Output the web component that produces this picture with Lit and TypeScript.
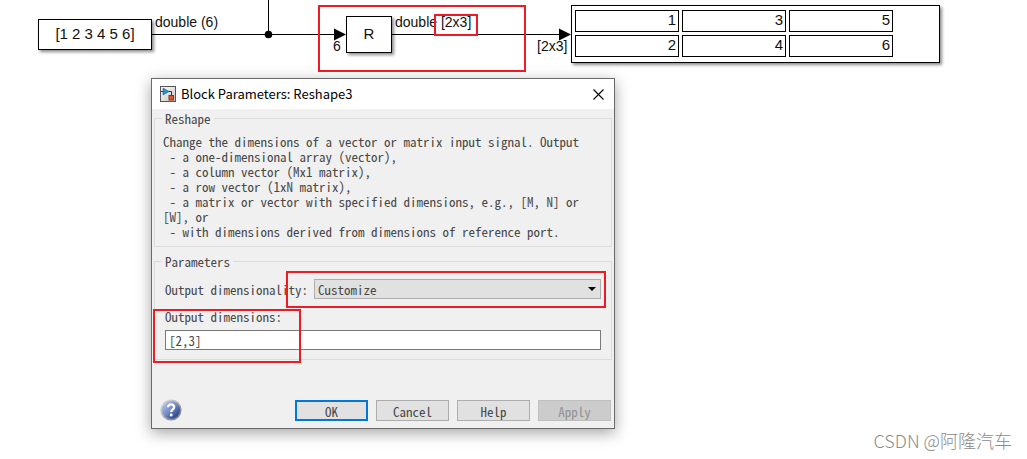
import { LitElement, html, css, svg } from "lit";
import { customElement, state } from "lit/decorators.js";

const DESCRIPTION = [
  "Change the dimensions of a vector or matrix input signal. Output",
  " - a one-dimensional array (vector),",
  " - a column vector (Mx1 matrix),",
  " - a row vector (1xN matrix),",
  " - a matrix or vector with specified dimensions, e.g., [M, N] or",
  "[W], or",
  " - with dimensions derived from dimensions of reference port.",
].join("\n");

const MATRIX = [
  [1, 3, 5],
  [2, 4, 6],
];

@customElement("model-canvas")
export class ModelCanvas extends LitElement {
  static styles = css`
    :host {
      display: block;
      position: absolute;
      inset: 0;
      font: 14px/16px "Liberation Sans", Arial, sans-serif;
      color: #111;
    }
    .wires {
      position: absolute;
      left: 0;
      top: 0;
    }
    .block {
      position: absolute;
      box-sizing: border-box;
      display: flex;
      align-items: center;
      justify-content: center;
      border: 1px solid #000;
      background: #fff;
      box-shadow: 2px 2px 3px rgba(0, 0, 0, 0.45);
      font-size: 15px;
    }
    .constant {
      left: 38px;
      top: 19px;
      width: 114px;
      height: 31px;
      padding-bottom: 2px;
    }
    .reshape {
      left: 346px;
      top: 16px;
      width: 46px;
      height: 37px;
      padding-bottom: 2px;
    }
    .display {
      left: 571px;
      top: 5px;
      width: 369px;
      height: 58px;
      align-items: flex-start;
      justify-content: flex-start;
      padding: 1px 0;
    }
    .matrix {
      border-collapse: separate;
      border-spacing: 3px;
    }
    .matrix td {
      box-sizing: border-box;
      width: 104px;
      height: 22px;
      padding: 0 2px 2px;
      border: 1px solid #000;
      text-align: right;
      line-height: 18px;
    }
    .label {
      position: absolute;
      white-space: pre;
    }
    .out-constant {
      left: 155px;
      top: 14px;
    }
    .in-reshape {
      left: 333px;
      top: 38px;
    }
    .out-reshape {
      left: 395px;
      top: 14px;
    }
    .in-display {
      left: 537px;
      top: 38px;
    }
  `;

  render() {
    return html`
      <svg class="wires" width="600" height="78" aria-hidden="true">
        ${svg`
          <g stroke="#000" stroke-width="1" fill="none">
            <path d="M152 34.5H340M392 34.5H562M268.5 0V34" />
          </g>
          <circle cx="268.5" cy="34.5" r="3.8" />
          <path d="M334 28.5L346 34.5L334 40.5ZM559 28.5L571 34.5L559 40.5Z" />
        `}
      </svg>
      <div class="block constant">[1 2 3 4 5 6]</div>
      <div class="block reshape">R</div>
      <div class="block display">
        <table class="matrix">
          <tbody>
            ${MATRIX.map((row) => html`<tr>${row.map((v) => html`<td>${v}</td>`)}</tr>`)}
          </tbody>
        </table>
      </div>
      <span class="label out-constant">double (6)</span>
      <span class="label in-reshape">6</span>
      <span class="label out-reshape">double [2x3]</span>
      <span class="label in-display">[2x3]</span>
    `;
  }
}

@customElement("block-dialog")
export class BlockDialog extends LitElement {
  @state() private dimensions = "[2,3]";

  static styles = css`
    :host {
      display: block;
      box-sizing: border-box;
      border: 1px solid #6a6a6a;
      background: #f0f0f0;
      box-shadow: 0 4px 14px rgba(0, 0, 0, 0.36);
      color: #484848;
      font: 13px/15px "Noto Sans Mono CJK SC", "Liberation Mono", monospace;
    }
    .titlebar {
      display: flex;
      align-items: center;
      gap: 5px;
      height: 30px;
      padding: 0 8px;
      background: #fff;
      color: #000;
    }
    .title {
      flex: 1;
      margin: 0;
      font: 13px/18px "Noto Sans CJK SC", "Open Sans", sans-serif;
    }
    .close {
      display: grid;
      place-items: center;
      width: 16px;
      height: 16px;
      padding: 0;
      border: 0;
      background: none;
    }
    .content {
      display: flex;
      flex-direction: column;
      gap: 7px;
      padding: 2px;
    }
    .group {
      min-width: 0;
      margin: 0;
      border: 1px solid #dcdcdc;
    }
    .group legend {
      padding: 0 3px;
      margin-left: 7px;
    }
    .about {
      padding: 8px 8px 7px;
    }
    .about p {
      margin: 0;
      white-space: pre-wrap;
    }
    .about legend {
      margin-left: -1px;
    }
    .params {
      padding: 10px 10px 9px;
    }
    .params legend {
      margin-left: -3px;
    }
    .row {
      display: flex;
      align-items: center;
      gap: 6px;
      margin-bottom: 10px;
    }
    .field {
      display: flex;
      flex-direction: column;
      gap: 6px;
    }
    .picker {
      position: relative;
      flex: 1;
      display: flex;
    }
    .picker select {
      flex: 1;
      appearance: none;
      height: 20px;
      padding: 0 3px;
      border: 1px solid #adadad;
      border-radius: 0;
      background: #e1e1e1;
      color: inherit;
      font: inherit;
    }
    .caret {
      position: absolute;
      right: 5px;
      top: 8px;
      pointer-events: none;
    }
    .field input {
      box-sizing: border-box;
      width: 100%;
      height: 20px;
      padding: 0 3px;
      border: 1px solid #7a7a7a;
      background: #fff;
      color: inherit;
      font: inherit;
    }
    .footer {
      display: flex;
      align-items: center;
      gap: 8px;
      padding: 37px 3px 7px 8px;
    }
    .help {
      display: flex;
      margin-right: auto;
      padding: 0;
      border: 0;
      background: none;
    }
    .btn {
      box-sizing: border-box;
      width: 73px;
      height: 21px;
      padding: 2px 0 0;
      border: 1px solid #adadad;
      background: #e1e1e1;
      color: inherit;
      font: inherit;
      line-height: 15px;
    }
    .primary {
      border: 2px solid #0078d7;
    }
    .btn:disabled {
      border-color: #bfbfbf;
      background: #ccc;
      color: #929292;
    }
  `;

  private onInput(e: Event) {
    this.dimensions = (e.target as HTMLInputElement).value;
  }

  render() {
    return html`
      <header class="titlebar">
        <svg width="16" height="16" viewBox="0 0 16 16" aria-hidden="true">
          <defs>
            <linearGradient id="tile" x1="0" y1="0" x2="1" y2="1">
              <stop offset="0" stop-color="#fff" />
              <stop offset="1" stop-color="#c4c4c4" />
            </linearGradient>
          </defs>
          <rect x="0.5" y="0.5" width="15" height="15" fill="url(#tile)" stroke="#555" />
          <path d="M1 5.5H3M8 5.5H11.5V9" fill="none" stroke="#333" />
          <path d="M3 2L9 5.5L3 9Z" fill="#2d8fd0" stroke="#155f96" stroke-width="0.6" />
          <rect x="9" y="9.5" width="4.5" height="4.5" fill="#e0592a" stroke="#a02c10" />
        </svg>
        <h1 class="title">Block Parameters: Reshape3</h1>
        <button class="close" aria-label="Close">
          <svg width="11" height="11" viewBox="0 0 11 11">
            <path d="M0.5 0.5L10.5 10.5M10.5 0.5L0.5 10.5" stroke="#000" stroke-width="1.1" />
          </svg>
        </button>
      </header>
      <div class="content">
        <fieldset class="group about">
          <legend>Reshape</legend>
          <p>${DESCRIPTION}</p>
        </fieldset>
        <fieldset class="group params">
          <legend>Parameters</legend>
          <div class="row">
            <label for="mode">Output dimensionality:</label>
            <div class="picker">
              <select id="mode">
                <option>Customize</option>
              </select>
              <svg class="caret" width="8" height="4" viewBox="0 0 8 4" aria-hidden="true">
                <path d="M0 0H8L4 4Z" fill="#000" />
              </svg>
            </div>
          </div>
          <div class="field">
            <label for="dims">Output dimensions:</label>
            <input id="dims" type="text" .value=${this.dimensions} @input=${this.onInput} />
          </div>
        </fieldset>
      </div>
      <footer class="footer">
        <button class="help" aria-label="Block help">
          <svg width="22" height="22" viewBox="0 0 22 22">
            <defs>
              <linearGradient id="ring" x1="0" y1="0" x2="1" y2="1">
                <stop offset="0" stop-color="#e8e8e8" />
                <stop offset="1" stop-color="#70707c" />
              </linearGradient>
              <linearGradient id="ball" x1="0.1" y1="0.1" x2="0.9" y2="0.9">
                <stop offset="0" stop-color="#b4c4e6" />
                <stop offset="0.5" stop-color="#7088c2" />
                <stop offset="1" stop-color="#203a86" />
              </linearGradient>
            </defs>
            <circle cx="11" cy="11" r="10.6" fill="url(#ring)" />
            <circle cx="11" cy="11" r="9" fill="url(#ball)" />
            <path
              d="M8 8.2C8 4.4 14.4 4.6 14.2 8.2C14.1 10.4 11.2 10.4 11.2 13"
              fill="none"
              stroke="#fff"
              stroke-width="2.2"
            />
            <circle cx="11.2" cy="16" r="1.4" fill="#fff" />
          </svg>
        </button>
        <button class="btn primary">OK</button>
        <button class="btn">Cancel</button>
        <button class="btn">Help</button>
        <button class="btn" disabled>Apply</button>
      </footer>
    `;
  }
}

@customElement("app-root")
export class AppRoot extends LitElement {
  static styles = css`
    :host {
      display: block;
      position: relative;
      min-height: 100vh;
      overflow: hidden;
      background: #fff;
    }
    .dialog {
      position: absolute;
      left: 151px;
      top: 78px;
      width: 464px;
    }
    .mark {
      position: absolute;
      box-sizing: border-box;
      border: 2px solid #ed1c24;
      pointer-events: none;
    }
    .mark-block {
      left: 318px;
      top: 5px;
      width: 208px;
      height: 67px;
    }
    .mark-size {
      left: 434px;
      top: 14px;
      width: 44px;
      height: 22px;
    }
    .mark-mode {
      left: 286px;
      top: 271px;
      width: 320px;
      height: 37px;
    }
    .mark-dims {
      left: 153px;
      top: 309px;
      width: 148px;
      height: 54px;
    }
    .credit {
      position: absolute;
      right: 15px;
      bottom: 7px;
      color: #8c8c8c;
      font: 300 18px/24px "Noto Sans CJK SC", sans-serif;
    }
  `;

  render() {
    return html`
      <model-canvas></model-canvas>
      <block-dialog class="dialog"></block-dialog>
      <div class="mark mark-block"></div>
      <div class="mark mark-size"></div>
      <div class="mark mark-mode"></div>
      <div class="mark mark-dims"></div>
      <div class="credit">CSDN @阿隆汽车</div>
    `;
  }
}
